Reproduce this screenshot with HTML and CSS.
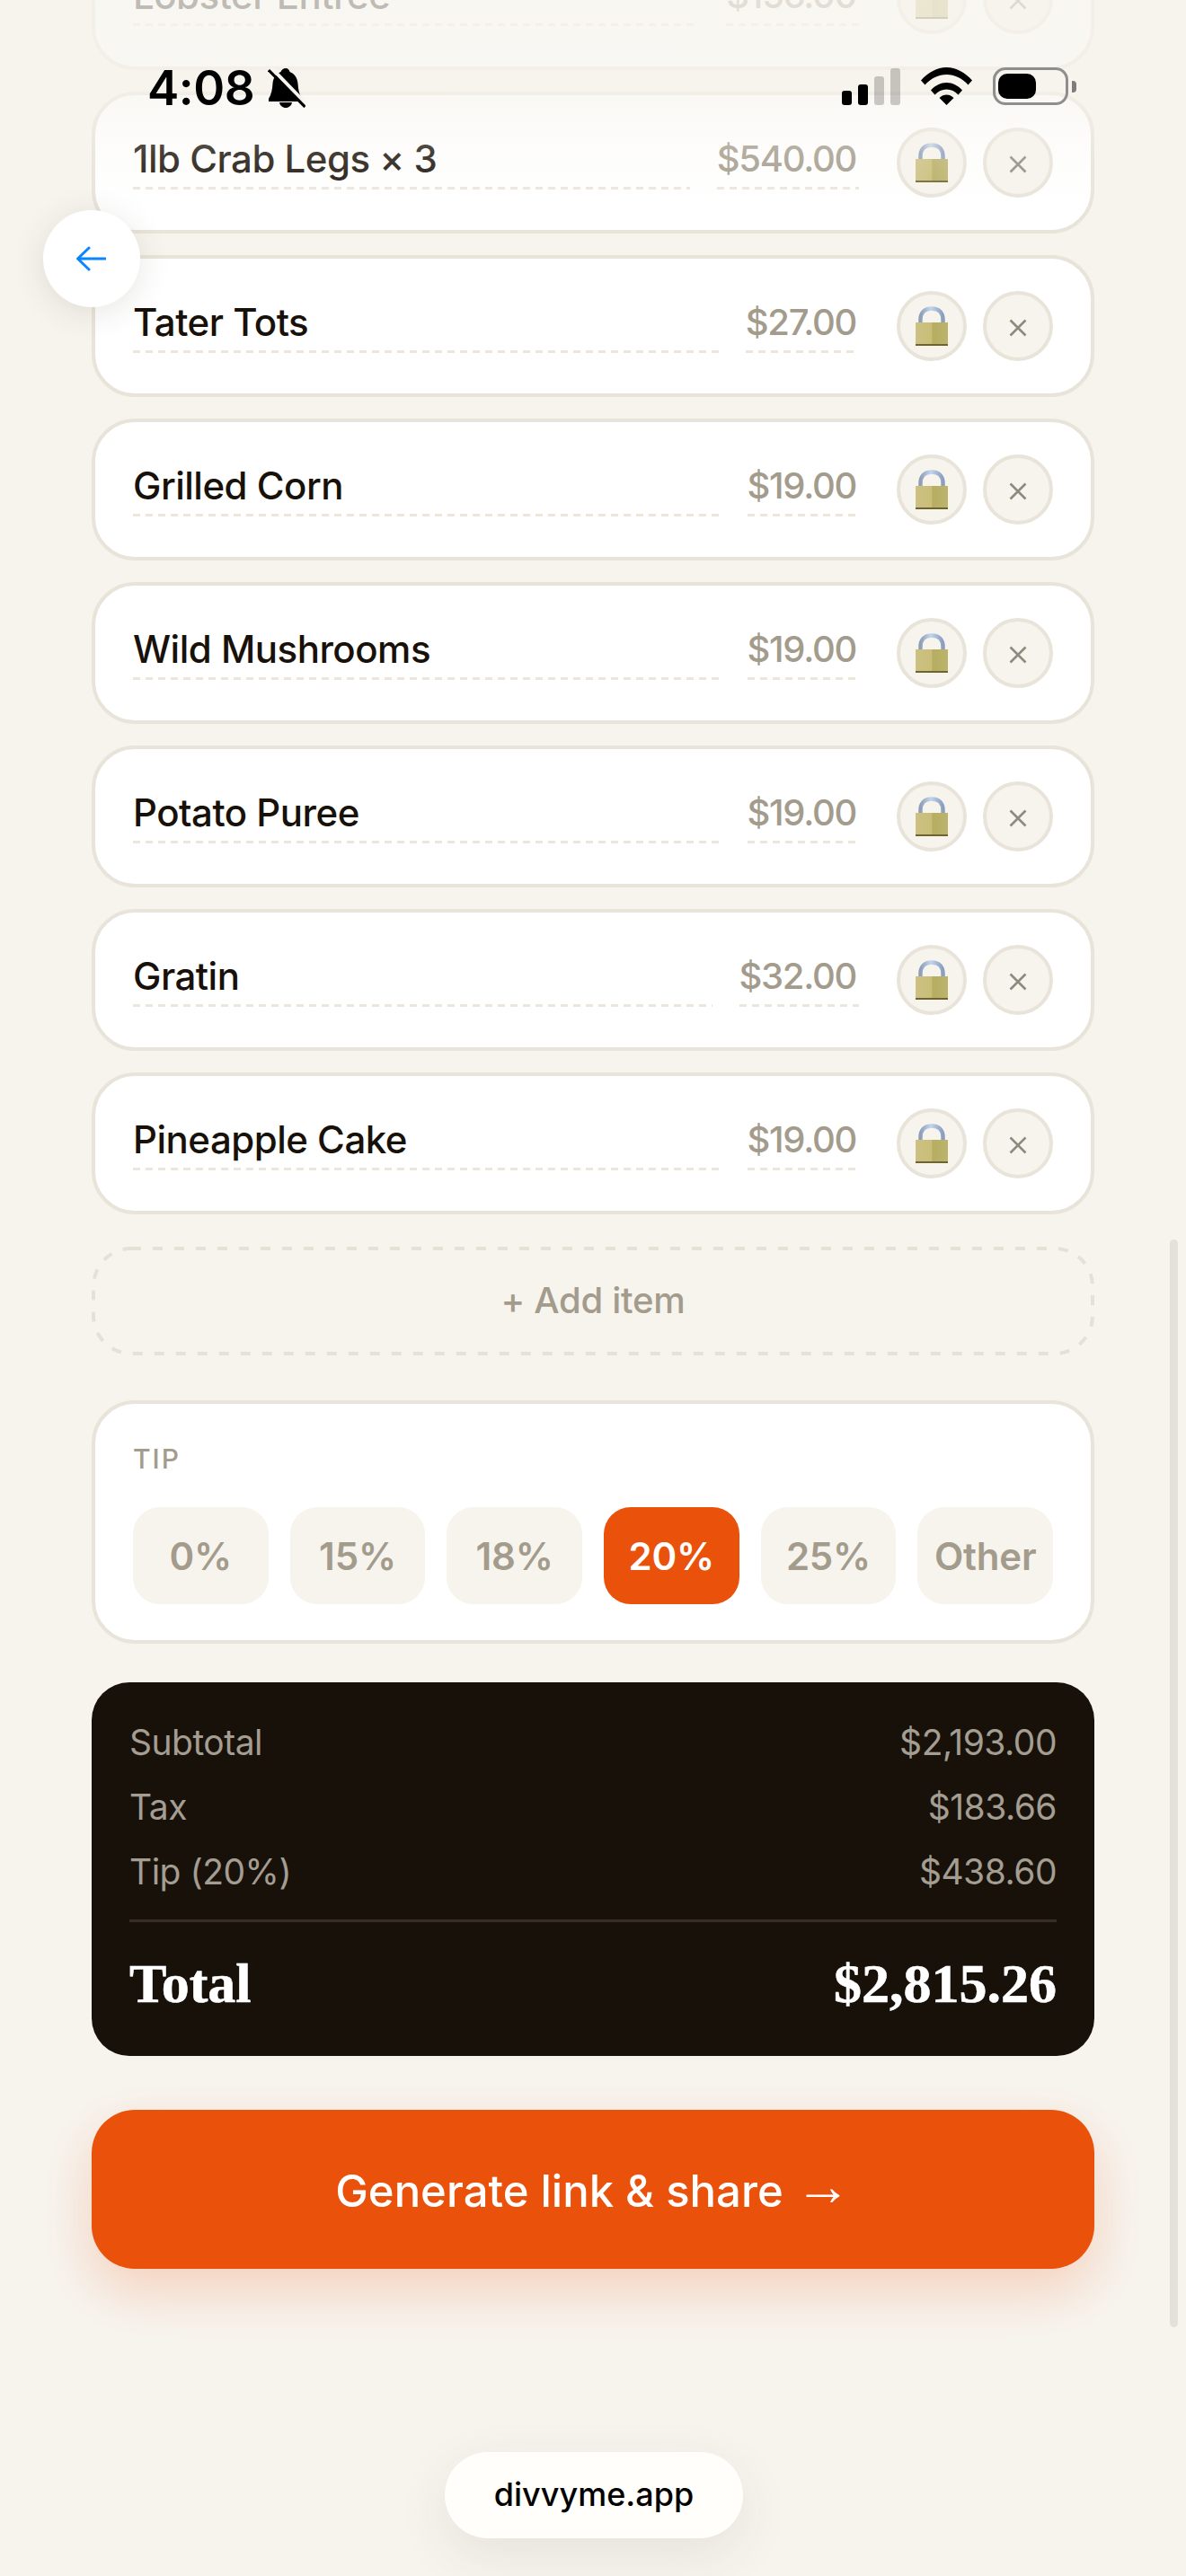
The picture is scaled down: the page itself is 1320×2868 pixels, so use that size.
FILE: index.html
```html
<!DOCTYPE html>
<html lang="en">
<head>
<meta charset="utf-8">
<title>divvyme</title>
<link rel="stylesheet" href="styles.css">
</head>
<body>
<svg class="defs" width="0" height="0" aria-hidden="true">
  <defs>
    <linearGradient id="brass" x1="0" y1="0" x2="1" y2="0">
      <stop offset="0" stop-color="#cdc183"/>
      <stop offset=".5" stop-color="#c9bd78"/>
      <stop offset=".52" stop-color="#b6ad62"/>
      <stop offset="1" stop-color="#bdb46c"/>
    </linearGradient>
    <linearGradient id="steel" x1="0" y1="0" x2="1" y2="0">
      <stop offset="0" stop-color="#8d9fb8"/>
      <stop offset=".45" stop-color="#c3d5ec"/>
      <stop offset="1" stop-color="#8a9ebf"/>
    </linearGradient>
    <symbol id="lock" viewBox="0 0 36 44">
      <path d="M5.500 24V15C5.500 7 10 2.500 18 2.500S30.500 7 30.500 15v9" fill="none" stroke="url(#steel)" stroke-width="4.500"/>
      <rect x="0" y="18" width="36" height="25" fill="url(#brass)"/>
      <rect x="0" y="42" width="36" height="2" fill="#6f6430"/>
    </symbol>
    <symbol id="cross" viewBox="0 0 20 20">
      <path d="M1.500 1.500l17 17M18.500 1.500l-17 17" fill="none" stroke="#8f8a7e" stroke-width="2.600"/>
    </symbol>
  </defs>
</svg>

<main class="page">
  <section class="items">
    <article class="item">
      <div class="field name">Lobster Entree</div>
      <div class="field price">$156.00</div>
      <button class="round"><svg class="lock-icon"><use href="#lock"/></svg></button>
      <button class="round"><svg class="cross-icon"><use href="#cross"/></svg></button>
    </article>
    <article class="item">
      <div class="field name">1lb Crab Legs × 3</div>
      <div class="field price">$540.00</div>
      <button class="round"><svg class="lock-icon"><use href="#lock"/></svg></button>
      <button class="round"><svg class="cross-icon"><use href="#cross"/></svg></button>
    </article>
    <article class="item">
      <div class="field name">Tater Tots</div>
      <div class="field price">$27.00</div>
      <button class="round"><svg class="lock-icon"><use href="#lock"/></svg></button>
      <button class="round"><svg class="cross-icon"><use href="#cross"/></svg></button>
    </article>
    <article class="item">
      <div class="field name">Grilled Corn</div>
      <div class="field price">$19.00</div>
      <button class="round"><svg class="lock-icon"><use href="#lock"/></svg></button>
      <button class="round"><svg class="cross-icon"><use href="#cross"/></svg></button>
    </article>
    <article class="item">
      <div class="field name">Wild Mushrooms</div>
      <div class="field price">$19.00</div>
      <button class="round"><svg class="lock-icon"><use href="#lock"/></svg></button>
      <button class="round"><svg class="cross-icon"><use href="#cross"/></svg></button>
    </article>
    <article class="item">
      <div class="field name">Potato Puree</div>
      <div class="field price">$19.00</div>
      <button class="round"><svg class="lock-icon"><use href="#lock"/></svg></button>
      <button class="round"><svg class="cross-icon"><use href="#cross"/></svg></button>
    </article>
    <article class="item">
      <div class="field name">Gratin</div>
      <div class="field price">$32.00</div>
      <button class="round"><svg class="lock-icon"><use href="#lock"/></svg></button>
      <button class="round"><svg class="cross-icon"><use href="#cross"/></svg></button>
    </article>
    <article class="item">
      <div class="field name">Pineapple Cake</div>
      <div class="field price">$19.00</div>
      <button class="round"><svg class="lock-icon"><use href="#lock"/></svg></button>
      <button class="round"><svg class="cross-icon"><use href="#cross"/></svg></button>
    </article>
  </section>

  <button class="add-item">+ Add item</button>

  <section class="tip-card">
    <div class="tip-label">TIP</div>
    <div class="tip-options">
      <button class="chip">0%</button>
      <button class="chip">15%</button>
      <button class="chip">18%</button>
      <button class="chip chip-active">20%</button>
      <button class="chip">25%</button>
      <button class="chip">Other</button>
    </div>
  </section>

  <section class="summary">
    <div class="summary-row"><span>Subtotal</span><span>$2,193.00</span></div>
    <div class="summary-row"><span>Tax</span><span>$183.66</span></div>
    <div class="summary-row"><span>Tip (20%)</span><span>$438.60</span></div>
    <div class="total-row"><span>Total</span><span>$2,815.26</span></div>
  </section>

  <button class="cta">Generate link &amp; share <span class="cta-arrow">→</span></button>
</main>

<div class="top-fade"></div>

<header class="status">
  <div class="status-left">
    <span class="time">4:08</span>
    <svg class="bell" viewBox="0 0 42 45">
      <path d="M20 1c2.500 0 4 1.800 4.500 4 5.500 2 8.500 7 9 13 .5 7 1.500 12 4.500 17v3H1v-3c3-5 4-10 4.500-17 .5-6 3.500-11 9-13 .5-2.200 3-4 5.500-4z" fill="#000"/>
      <path d="M13 39h14c-.5 3.500-3.500 6-7 6s-6.500-2.500-7-6z" fill="#000"/>
      <path d="M3.500 0L44 42" stroke="#f7f4ee" stroke-width="4"/>
      <path d="M1 3l40.500 41" stroke="#000" stroke-width="3.200"/>
    </svg>
  </div>
  <div class="status-right">
    <svg class="signal" viewBox="0 0 65 41">
      <rect x="0" y="25" width="11" height="16" rx="3" fill="#000"/>
      <rect x="18" y="18" width="11" height="23" rx="3" fill="#000"/>
      <rect x="36" y="9" width="11" height="32" rx="3" fill="#000" opacity=".2"/>
      <rect x="54" y="0" width="11" height="41" rx="3" fill="#000" opacity=".2"/>
    </svg>
    <svg class="wifi" viewBox="0 0 57 42">
      <path d="M0 14.500C8 5.500 18 0 28.500 0S49 5.500 57 14.500l-4.500 5C45.500 12 37.500 8 28.500 8S11.500 12 4.500 19.500z" fill="#000"/>
      <path d="M11 25.500C16 20 22 17 28.500 17S41 20 46 25.500l-4.500 5C38 26.500 33.500 24.500 28.500 24.500S19 26.500 15.500 30.500z" fill="#000"/>
      <path d="M20.500 34c2.500-2.500 5-3.500 8-3.500s5.500 1 8 3.500l-8 8z" fill="#000"/>
    </svg>
    <div class="battery">
      <div class="battery-shell"><div class="battery-level"></div></div>
      <div class="battery-nub"></div>
    </div>
  </div>
</header>

<button class="back" aria-label="Back">
  <svg class="back-icon" viewBox="0 0 34 28">
    <path d="M33 14H3M15 2L2.500 14 15 26" fill="none" stroke="#0a84ff" stroke-width="3" stroke-linecap="round" stroke-linejoin="round"/>
  </svg>
</button>

<div class="scrollbar"></div>
<div class="address">divvyme.app</div>
</body>
</html>
```

FILE: styles.css
```css
* { box-sizing: border-box; }

html, body {
  margin: 0;
  height: 2868px;
  overflow: hidden;
  background: #f7f4ee;
}

body {
  position: relative;
  font-family: Inter, "Liberation Sans", sans-serif;
  color: #18110a;
}

button {
  font-family: inherit;
  border: 0;
  padding: 0;
}

.defs { position: absolute; }

.page {
  display: flex;
  flex-direction: column;
  padding: 0 102px;
  margin-top: -80px;
}

.items {
  display: flex;
  flex-direction: column;
  gap: 24px;
}

.item {
  display: flex;
  align-items: center;
  height: 158px;
  padding: 0 42px;
  background: #fff;
  border: 4px solid #e9e4da;
  border-radius: 48px;
}

.field {
  height: 60px;
  line-height: 51px;
  white-space: nowrap;
  background: repeating-linear-gradient(90deg, #ece6dc 0 8px, transparent 8px 14px) left bottom / 100% 3px no-repeat;
}

.name {
  flex: 1;
  font-size: 42px;
  font-weight: 450;
  letter-spacing: -0.5px;
  margin-right: 30px;
}

.price {
  font-size: 40px;
  font-weight: 550;
  letter-spacing: -1.3px;
  color: #a39b8c;
  padding-right: 3px;
  margin-right: 42px;
}

.round {
  flex: none;
  width: 78px;
  height: 78px;
  display: flex;
  align-items: center;
  justify-content: center;
  background: #f7f4ee;
  border: 4px solid #e9e4da;
  border-radius: 50%;
}

.round + .round { margin-left: 18px; }

.lock-icon { width: 36px; height: 44px; }
.cross-icon { width: 20px; height: 20px; margin-top: 3px; }

.add-item {
  height: 121px;
  margin-top: 36px;
  padding-bottom: 2px;
  background: transparent url("data:image/svg+xml,%3Csvg xmlns='http://www.w3.org/2000/svg' width='1116' height='121'%3E%3Crect x='2' y='2' width='1112' height='117' rx='42' fill='none' stroke='%23e6e1d6' stroke-width='4' stroke-dasharray='11 13'/%3E%3C/svg%3E") no-repeat;
  font-size: 40px;
  font-weight: 550;
  letter-spacing: -0.3px;
  color: #a39b8c;
}

.tip-card {
  margin-top: 50px;
  padding: 40px 42px;
  background: #fff;
  border: 4px solid #e9e4da;
  border-radius: 48px;
}

.tip-label {
  height: 43px;
  line-height: 43px;
  font-size: 30px;
  font-weight: 500;
  letter-spacing: 2px;
  color: #a39b8c;
}

.tip-options {
  display: grid;
  grid-template-columns: repeat(6, 1fr);
  gap: 24px;
  margin-top: 32px;
}

.chip {
  height: 108px;
  background: #f7f4ee;
  border-radius: 30px;
  font-size: 42px;
  font-weight: 600;
  letter-spacing: -0.2px;
  color: #a39b8c;
}

.chip-active {
  background: #ea510b;
  color: #fff;
}

.summary {
  margin-top: 43px;
  padding: 41px 42px 42px;
  background: #18110a;
  border-radius: 42px;
}

.summary-row {
  display: flex;
  justify-content: space-between;
  height: 51px;
  line-height: 51px;
  font-size: 39px;
  font-weight: 400;
  letter-spacing: -0.5px;
  color: #a39d92;
}

.summary-row + .summary-row { margin-top: 21px; }

.total-row {
  display: flex;
  justify-content: space-between;
  margin-top: 28px;
  padding-top: 29px;
  height: 110px;
  line-height: 78px;
  border-top: 3px solid #352d26;
  font-family: "Liberation Serif", serif;
  font-size: 62px;
  font-weight: 700;
  color: #fff;
  -webkit-text-stroke: 0.6px #fff;
}

.cta {
  height: 177px;
  margin-top: 60px;
  padding-top: 3px;
  background: #ea510b;
  border-radius: 48px;
  font-size: 49px;
  font-weight: 500;
  color: #fff;
  box-shadow: 0 24px 60px rgba(235, 82, 12, 0.22);
}

.cta-arrow {
  font-family: "Liberation Serif", serif;
  font-weight: 400;
  font-size: 62px;
  line-height: 0;
  vertical-align: 2px;
}

.top-fade {
  position: absolute;
  left: 0;
  top: 0;
  width: 100%;
  height: 240px;
  background: linear-gradient(180deg, rgba(247, 244, 238, 0.75) 0, rgba(247, 244, 238, 0.72) 90px, rgba(247, 244, 238, 0.2) 170px, rgba(247, 244, 238, 0) 240px);
}

.status {
  position: absolute;
  left: 164px;
  top: 75px;
  width: 1034px;
  height: 45px;
  display: flex;
  justify-content: space-between;
  align-items: flex-start;
}

.status-left {
  display: flex;
  align-items: flex-start;
  gap: 15px;
}

.time {
  font-size: 53px;
  line-height: 46px;
  font-weight: 600;
  letter-spacing: -0.5px;
  color: #000;
}

.bell { width: 42px; height: 45px; }

.status-right {
  display: flex;
  align-items: flex-start;
  gap: 23px;
}

.signal { width: 65px; height: 41px; margin-top: 1px; }
.wifi { width: 57px; height: 42px; }

.battery {
  display: flex;
  align-items: center;
  gap: 4px;
}

.battery-shell {
  width: 84px;
  height: 42px;
  padding: 4px 3px;
  border: 3px solid #8e8e8e;
  border-radius: 14px;
}

.battery-level {
  width: 42px;
  height: 28px;
  background: #000;
  border-radius: 10px;
}

.battery-nub {
  width: 5px;
  height: 13px;
  background: #7d7d7d;
  border-radius: 0 4px 4px 0;
}

.back {
  position: absolute;
  left: 48px;
  top: 234px;
  width: 108px;
  height: 108px;
  display: flex;
  align-items: center;
  justify-content: center;
  background: #fff;
  border-radius: 50%;
  box-shadow: 0 6px 36px rgba(60, 50, 30, 0.12);
}

.back-icon { width: 34px; height: 28px; margin-right: 2px; }

.scrollbar {
  position: absolute;
  left: 1302px;
  top: 1380px;
  width: 9px;
  height: 1211px;
  background: #e4e1db;
  border-radius: 5px;
}

.address {
  position: absolute;
  left: 495px;
  top: 2730px;
  width: 332px;
  height: 96px;
  line-height: 94px;
  text-align: center;
  background: #fffefa;
  border-radius: 48px;
  font-size: 36px;
  font-weight: 500;
  color: #000;
  box-shadow: 0 18px 60px rgba(60, 50, 30, 0.09);
}
```
